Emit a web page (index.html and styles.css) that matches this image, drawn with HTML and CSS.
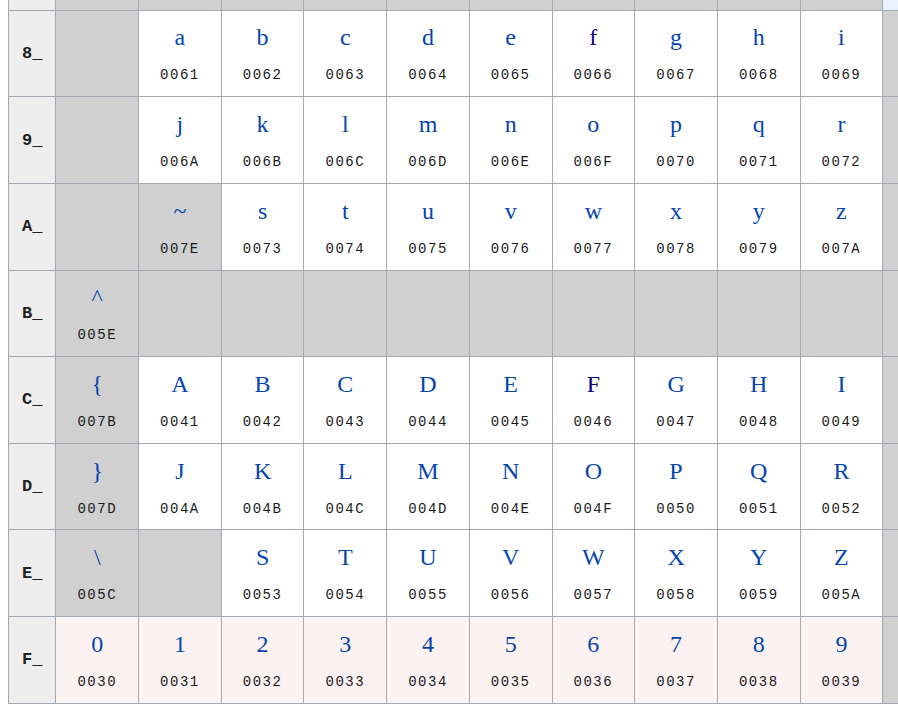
FILE: index.html
```html
<!DOCTYPE html>
<html lang="en">
<head>
<meta charset="UTF-8">
<title>Character chart</title>
<link rel="stylesheet" href="styles.css">
</head>
<body>
<main>
<table class="chart">
<colgroup><col class="c-head"><col span="16" class="c-cell"></colgroup>
<tbody>
<tr>
<th></th>
<td class="na"></td><td class="na"></td><td class="na"></td><td class="na"></td><td class="na"></td>
<td class="na"></td><td class="na"></td><td class="na"></td><td class="na"></td><td class="na"></td>
<td class="free"></td><td class="na"></td><td class="na"></td><td class="na"></td><td class="na"></td><td class="na"></td>
</tr>
<tr>
<th>8_</th>
<td class="na"></td>
<td><a class="ch" href="#">a</a><div class="cp">0061</div></td>
<td><a class="ch" href="#">b</a><div class="cp">0062</div></td>
<td><a class="ch" href="#">c</a><div class="cp">0063</div></td>
<td><a class="ch" href="#">d</a><div class="cp">0064</div></td>
<td><a class="ch" href="#">e</a><div class="cp">0065</div></td>
<td><a class="ch seen" href="#">f</a><div class="cp">0066</div></td>
<td><a class="ch" href="#">g</a><div class="cp">0067</div></td>
<td><a class="ch" href="#">h</a><div class="cp">0068</div></td>
<td><a class="ch" href="#">i</a><div class="cp">0069</div></td>
<td class="na"></td><td class="na"></td><td class="na"></td><td class="na"></td><td class="na"></td><td class="na"></td>
</tr>
<tr>
<th>9_</th>
<td class="na"></td>
<td><a class="ch" href="#">j</a><div class="cp">006A</div></td>
<td><a class="ch" href="#">k</a><div class="cp">006B</div></td>
<td><a class="ch" href="#">l</a><div class="cp">006C</div></td>
<td><a class="ch" href="#">m</a><div class="cp">006D</div></td>
<td><a class="ch" href="#">n</a><div class="cp">006E</div></td>
<td><a class="ch" href="#">o</a><div class="cp">006F</div></td>
<td><a class="ch" href="#">p</a><div class="cp">0070</div></td>
<td><a class="ch" href="#">q</a><div class="cp">0071</div></td>
<td><a class="ch" href="#">r</a><div class="cp">0072</div></td>
<td class="na"></td><td class="na"></td><td class="na"></td><td class="na"></td><td class="na"></td><td class="na"></td>
</tr>
<tr>
<th>A_</th>
<td class="na"></td>
<td class="na"><a class="ch" href="#">~</a><div class="cp">007E</div></td>
<td><a class="ch" href="#">s</a><div class="cp">0073</div></td>
<td><a class="ch" href="#">t</a><div class="cp">0074</div></td>
<td><a class="ch" href="#">u</a><div class="cp">0075</div></td>
<td><a class="ch" href="#">v</a><div class="cp">0076</div></td>
<td><a class="ch" href="#">w</a><div class="cp">0077</div></td>
<td><a class="ch" href="#">x</a><div class="cp">0078</div></td>
<td><a class="ch" href="#">y</a><div class="cp">0079</div></td>
<td><a class="ch" href="#">z</a><div class="cp">007A</div></td>
<td class="na"></td><td class="na"></td><td class="na"></td><td class="na"></td><td class="na"></td><td class="na"></td>
</tr>
<tr>
<th>B_</th>
<td class="na"><a class="ch" href="#">^</a><div class="cp">005E</div></td>
<td class="na"></td><td class="na"></td><td class="na"></td><td class="na"></td><td class="na"></td>
<td class="na"></td><td class="na"></td><td class="na"></td><td class="na"></td>
<td class="na"></td><td class="na"></td><td class="na"></td><td class="na"></td><td class="na"></td><td class="na"></td>
</tr>
<tr>
<th>C_</th>
<td class="na"><a class="ch" href="#">{</a><div class="cp">007B</div></td>
<td><a class="ch" href="#">A</a><div class="cp">0041</div></td>
<td><a class="ch" href="#">B</a><div class="cp">0042</div></td>
<td><a class="ch" href="#">C</a><div class="cp">0043</div></td>
<td><a class="ch" href="#">D</a><div class="cp">0044</div></td>
<td><a class="ch" href="#">E</a><div class="cp">0045</div></td>
<td><a class="ch seen" href="#">F</a><div class="cp">0046</div></td>
<td><a class="ch" href="#">G</a><div class="cp">0047</div></td>
<td><a class="ch" href="#">H</a><div class="cp">0048</div></td>
<td><a class="ch" href="#">I</a><div class="cp">0049</div></td>
<td class="na"></td><td class="na"></td><td class="na"></td><td class="na"></td><td class="na"></td><td class="na"></td>
</tr>
<tr>
<th>D_</th>
<td class="na"><a class="ch" href="#">}</a><div class="cp">007D</div></td>
<td><a class="ch" href="#">J</a><div class="cp">004A</div></td>
<td><a class="ch" href="#">K</a><div class="cp">004B</div></td>
<td><a class="ch" href="#">L</a><div class="cp">004C</div></td>
<td><a class="ch" href="#">M</a><div class="cp">004D</div></td>
<td><a class="ch" href="#">N</a><div class="cp">004E</div></td>
<td><a class="ch" href="#">O</a><div class="cp">004F</div></td>
<td><a class="ch" href="#">P</a><div class="cp">0050</div></td>
<td><a class="ch" href="#">Q</a><div class="cp">0051</div></td>
<td><a class="ch" href="#">R</a><div class="cp">0052</div></td>
<td class="na"></td><td class="na"></td><td class="na"></td><td class="na"></td><td class="na"></td><td class="na"></td>
</tr>
<tr>
<th>E_</th>
<td class="na"><a class="ch" href="#">\</a><div class="cp">005C</div></td>
<td class="na"></td>
<td><a class="ch" href="#">S</a><div class="cp">0053</div></td>
<td><a class="ch" href="#">T</a><div class="cp">0054</div></td>
<td><a class="ch" href="#">U</a><div class="cp">0055</div></td>
<td><a class="ch" href="#">V</a><div class="cp">0056</div></td>
<td><a class="ch" href="#">W</a><div class="cp">0057</div></td>
<td><a class="ch" href="#">X</a><div class="cp">0058</div></td>
<td><a class="ch" href="#">Y</a><div class="cp">0059</div></td>
<td><a class="ch" href="#">Z</a><div class="cp">005A</div></td>
<td class="na"></td><td class="na"></td><td class="na"></td><td class="na"></td><td class="na"></td><td class="na"></td>
</tr>
<tr class="digits">
<th>F_</th>
<td><a class="ch" href="#">0</a><div class="cp">0030</div></td>
<td><a class="ch" href="#">1</a><div class="cp">0031</div></td>
<td><a class="ch" href="#">2</a><div class="cp">0032</div></td>
<td><a class="ch" href="#">3</a><div class="cp">0033</div></td>
<td><a class="ch" href="#">4</a><div class="cp">0034</div></td>
<td><a class="ch" href="#">5</a><div class="cp">0035</div></td>
<td><a class="ch" href="#">6</a><div class="cp">0036</div></td>
<td><a class="ch" href="#">7</a><div class="cp">0037</div></td>
<td><a class="ch" href="#">8</a><div class="cp">0038</div></td>
<td><a class="ch" href="#">9</a><div class="cp">0039</div></td>
<td class="na"></td><td class="na"></td><td class="na"></td><td class="na"></td><td class="na"></td><td class="na"></td>
</tr>
</tbody>
</table>
</main>
</body>
</html>
```

FILE: styles.css
```css
html, body {
	margin: 0;
	overflow: hidden;
	background: #fff;
}

main {
	padding-left: 8px;
}

/* page is scrolled: only the tail of row 7_ is in view */
.chart {
	border-collapse: collapse;
	table-layout: fixed;
	width: 1370px;
	margin-top: -77px;
	color: #202122;
}

.c-head { width: 47.4px; }
.c-cell { width: 82.7px; }

.chart tr {
	height: 86.625px;
}

.chart th,
.chart td {
	border: 1px solid #a2a9b1;
	padding: 1px 0 0;
	text-align: center;
	vertical-align: middle;
}

.chart th {
	background: #eeeeee;
	padding: 0;
	font: bold 17px "Liberation Mono", monospace;
}

.chart td { background: #fff; }
.chart td.na { background: #d0d0d0; }
.chart td.free { background: #eaf3ff; }
.chart tr.digits td { background: #fcf2f2; }
.chart tr.digits td.na { background: #d0d0d0; }

.ch {
	display: block;
	font: 24px/30px "Liberation Serif", serif;
	color: #0645ad;
	text-decoration: none;
}

.ch.seen { color: #0b0080; }

.cp {
	font: 14px/20px "Liberation Mono", monospace;
	letter-spacing: 1.5px;
	margin-top: 13px;
	color: #1a1a1a;
}
```
